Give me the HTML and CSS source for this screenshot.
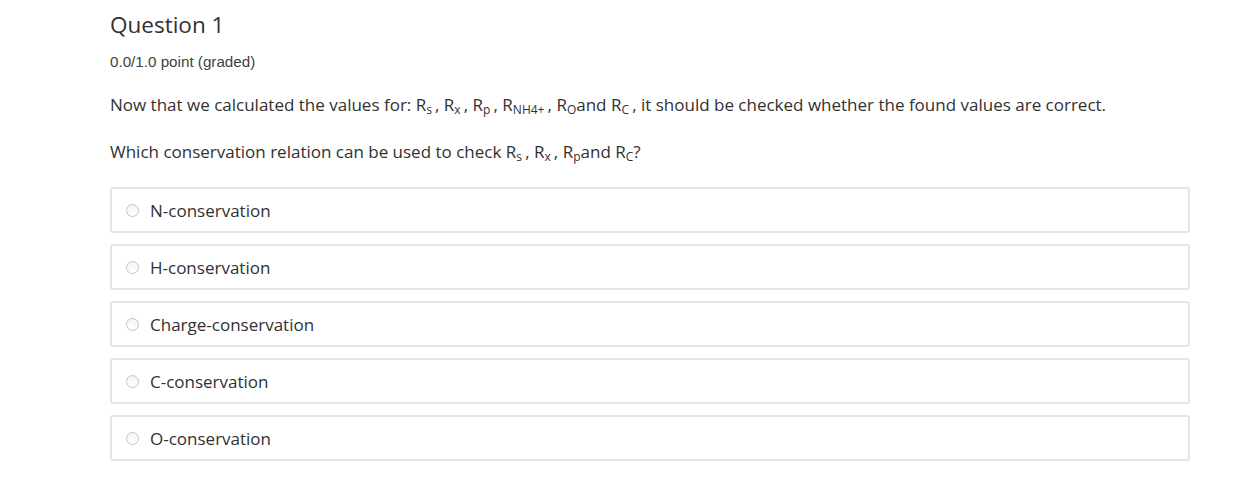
FILE: index.html
```html
<!DOCTYPE html>
<html>
<head>
<meta charset="utf-8">
<link rel="stylesheet" href="styles.css">
</head>
<body>
<div class="problem">
  <h3 class="title">Question 1</h3>
  <div class="score">0.0/1.0 point (graded)</div>
  <p class="text">Now that we calculated the values for: R<sub>s </sub>, R<sub>x </sub>, R<sub>p </sub>, R<sub>NH4+ </sub>, R<sub>O</sub>and R<sub>C </sub>, it should be checked whether the found values are correct.</p>
  <p class="text">Which conservation relation can be used to check R<sub>s </sub>, R<sub>x </sub>, R<sub>p</sub>and R<sub>C</sub>?</p>
  <div class="options">
    <label class="option"><span class="radio"></span><span class="label">N-conservation</span></label>
    <label class="option"><span class="radio"></span><span class="label">H-conservation</span></label>
    <label class="option"><span class="radio"></span><span class="label">Charge-conservation</span></label>
    <label class="option"><span class="radio"></span><span class="label">C-conservation</span></label>
    <label class="option"><span class="radio"></span><span class="label">O-conservation</span></label>
  </div>
</div>
</body>
</html>
```
FILE: styles.css
```css
html, body {
  margin: 0;
  padding: 0;
  background: #fff;
}
body {
  font-family: "Open Sans", "DejaVu Sans", sans-serif;
  color: #313131;
}
.problem {
  margin-left: 110px;
  width: 1080px;
  padding-top: 9px;
}
.title {
  margin: 0;
  font-size: 22.5px;
  font-weight: 400;
  line-height: 32px;
  color: #313131;
}
.score {
  margin-top: 11px;
  font-family: "Liberation Sans", Arial, sans-serif;
  font-size: 15.2px;
  line-height: 20px;
  color: #414141;
}
.text {
  margin: 21px 0 0;
  font-size: 17px;
  line-height: 24px;
}
.text + .text {
  margin-top: 23px;
}
sub {
  font-size: 12px;
  vertical-align: -3px;
  line-height: 0;
}
.options {
  margin-top: 23px;
  display: flex;
  flex-direction: column;
  gap: 11px;
}
.option {
  display: flex;
  align-items: center;
  height: 42px;
  border: 2px solid #e4e4e4;
  border-radius: 3px;
  padding-left: 14px;
  font-size: 17px;
  color: #313131;
}
.radio {
  width: 11px;
  height: 11px;
  border: 1px solid #c4c4c4;
  border-radius: 50%;
  background: linear-gradient(#f4f4f4, #ffffff);
  margin-right: 11px;
}
```
